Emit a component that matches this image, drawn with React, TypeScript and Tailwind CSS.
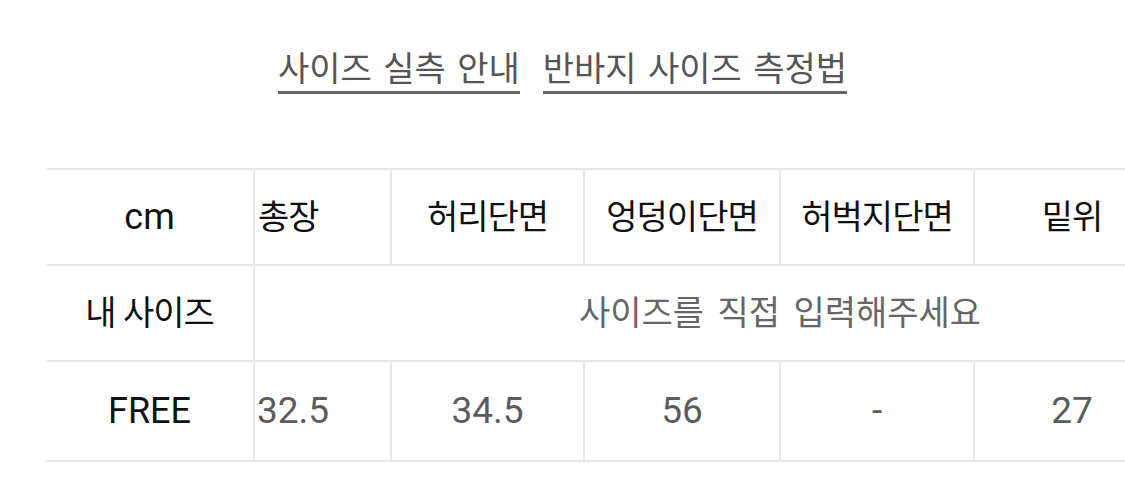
const COLS = 'grid grid-cols-[207px_137px_193px_196px_194px_196px_136px]';

const headers = ['총장', '허리단면', '엉덩이단면', '허벅지단면', '밑위', ''];
const free = ['32.5', '34.5', '56', '-', '27', ''];

export default function App() {
  return (
    <div className="w-[1125px] h-[486px] overflow-hidden bg-white font-['Roboto','Noto_Sans_CJK_KR',sans-serif]">
      {/* Title links */}
      <div className="flex justify-center gap-[23px] pt-[52px]">
        <span className="border-b-[3px] border-[#666] pb-[5px] text-[34px] leading-none text-[#555] [word-spacing:3px]">
          사이즈 실측 안내
        </span>
        <span className="border-b-[3px] border-[#666] pb-[5px] text-[34px] leading-none text-[#555] [word-spacing:3px]">
          반바지 사이즈 측정법
        </span>
      </div>

      {/* Size table */}
      <div className="ml-[46px] mt-[74px] w-[1259px] border-t-2 border-[#e8e8e8]">
        <div className={`${COLS} h-[96px] border-b-2 border-[#e8e8e8]`}>
          <div className="flex items-center justify-center text-[36px] text-[#111]">cm</div>
          {headers.map((h, i) => (
            <div
              key={i}
              className={`flex items-center border-l-2 border-[#e8e8e8] text-[34px] tracking-[-1px] text-[#111] ${
                i === 0 ? 'justify-start pl-[3px]' : 'justify-center'
              }`}
            >
              {h}
            </div>
          ))}
        </div>

        <div className={`${COLS} h-[96px] border-b-2 border-[#e8e8e8]`}>
          <div className="flex items-center justify-center text-[34px] tracking-[-1px] text-[#111]">
            내 사이즈
          </div>
          <div className="col-span-6 flex items-center justify-center border-l-2 border-[#e8e8e8] text-[34px] text-[#666] [word-spacing:5px]">
            사이즈를 직접 입력해주세요
          </div>
        </div>

        <div className={`${COLS} h-[100px] border-b-2 border-[#e8e8e8]`}>
          <div className="flex items-center justify-center text-[36px] text-[#111]">FREE</div>
          {free.map((v, i) => (
            <div
              key={i}
              className={`flex items-center border-l-2 border-[#e8e8e8] text-[37px] text-[#5c5c5c] ${
                i === 0 ? 'justify-start pl-[2px]' : 'justify-center'
              }`}
            >
              {v}
            </div>
          ))}
        </div>
      </div>
    </div>
  );
}
